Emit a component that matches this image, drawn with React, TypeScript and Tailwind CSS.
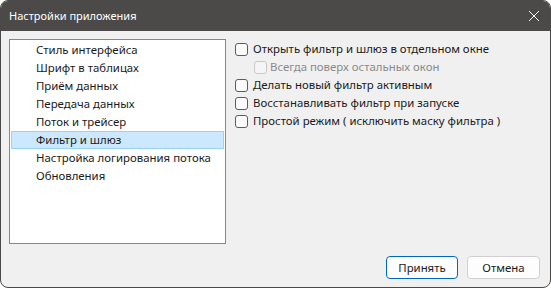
import { useState } from "react";

const ITEMS = [
  "Стиль интерфейса",
  "Шрифт в таблицах",
  "Приём данных",
  "Передача данных",
  "Поток и трейсер",
  "Фильтр и шлюз",
  "Настройка логирования потока",
  "Обновления",
];

function Box({ disabled }: { disabled?: boolean }) {
  return (
    <span
      className={
        disabled
          ? "w-[13px] h-[13px] rounded-[3px] border border-[#c8c8c8] bg-[#f5f5f5] shrink-0"
          : "w-[13px] h-[13px] rounded-[3px] border border-[#5c5c5c] bg-[#fbfbfb] shrink-0"
      }
    />
  );
}

export default function App() {
  const [selected, setSelected] = useState(5);

  return (
    <div className="w-[551px] h-[288px] bg-white" style={{ fontFamily: '"Noto Sans", "Open Sans", sans-serif' }}>
      <div className="w-full h-full rounded-lg overflow-hidden border border-[#4a4948] flex flex-col bg-[#f0f0f0]">
        {/* title bar */}
        <div className="h-[30px] bg-[#4b4a48] flex items-center justify-between pl-[8px] pr-[10px] shrink-0">
          <span className="text-white text-[11px]">Настройки приложения</span>
          <svg width="12" height="12" viewBox="0 0 12 12" className="text-white">
            <path d="M1 1 L11 11 M11 1 L1 11" stroke="currentColor" strokeWidth="1" />
          </svg>
        </div>

        <div className="flex-1 flex flex-col px-[8px] pt-[8px] pb-[8px]">
          <div className="flex gap-[9px]">
            <div className="w-[217px] h-[205px] bg-white border border-[#828790] p-[1px]">
              {ITEMS.map((item, i) => (
                <div
                  key={item}
                  onClick={() => setSelected(i)}
                  className={
                    i === selected
                      ? "h-[18px] flex items-center pl-[24px] text-[11.4px] text-[#1a1a1a] bg-[#cce8ff] border border-[#99d1ff]"
                      : "h-[18px] flex items-center pl-[24px] text-[11.4px] text-[#1a1a1a] border border-transparent"
                  }
                >
                  {item}
                </div>
              ))}
            </div>

            <div className="flex flex-col pt-[1px] text-[11.4px] text-[#1a1a1a]">
              <label className="h-[18px] flex items-center gap-[5px]">
                <Box />
                Открыть фильтр и шлюз в отдельном окне
              </label>
              <label className="h-[18px] flex items-center gap-[3px] pl-[19px] text-[#8a8a8a]">
                <Box disabled />
                Всегда поверх остальных окон
              </label>
              <label className="h-[18px] flex items-center gap-[5px]">
                <Box />
                Делать новый фильтр активным
              </label>
              <label className="h-[18px] flex items-center gap-[5px]">
                <Box />
                Восстанавливать фильтр при запуске
              </label>
              <label className="h-[18px] flex items-center gap-[5px]">
                <Box />
                Простой режим ( исключить маску фильтра )
              </label>
            </div>
          </div>

          <div className="flex justify-end gap-[9px] mt-auto pr-[2px]">
            <button className="w-[72px] h-[23px] rounded-[4px] border border-[#0067c0] bg-[#fdfdfd] text-[11.4px] text-[#1a1a1a]">
              Принять
            </button>
            <button className="w-[73px] h-[23px] rounded-[4px] border border-[#d0d0d0] bg-[#fdfdfd] text-[11.4px] text-[#1a1a1a]">
              Отмена
            </button>
          </div>
        </div>
      </div>
    </div>
  );
}
